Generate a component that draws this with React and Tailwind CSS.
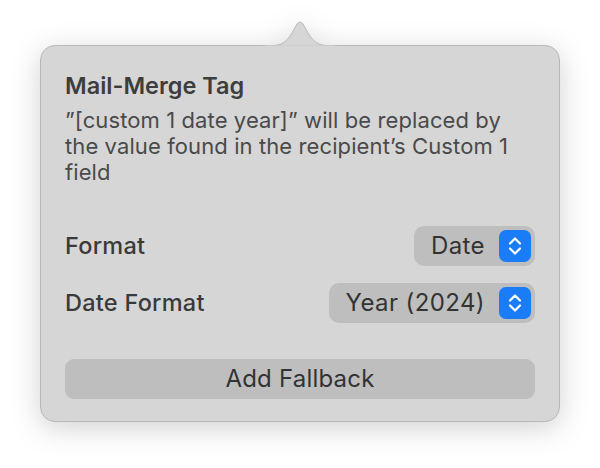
import React from "react";

const Stepper = () => (
    <span className="flex items-center justify-center w-[32px] h-[32px] rounded-[7px] bg-[#1b7cf8]">
        <svg width="16" height="24" viewBox="0 0 16 24" fill="none">
            <path d="M3 9.5L8 4.5L13 9.5" stroke="white" strokeWidth="2.2" strokeLinecap="round" strokeLinejoin="round" />
            <path d="M3 14.5L8 19.5L13 14.5" stroke="white" strokeWidth="2.2" strokeLinecap="round" strokeLinejoin="round" />
        </svg>
    </span>
);

const PopupButton = ({ label }) => (
    <button className="flex items-center gap-[14px] h-[40px] pl-[17px] pr-[4px] rounded-[10px] bg-[#bebebe] text-[#333] text-[24px] tracking-[0.4px]">
        <span>{label}</span>
        <Stepper />
    </button>
);

const App = () => {
    return (
        <div className="w-[600px] h-[468px] bg-white pt-[45px] pl-[40px]" style={{ fontFamily: "Inter, 'Noto Sans', sans-serif" }}>
            <div className="relative w-[520px] h-[377px] drop-shadow-[0_6px_14px_rgba(0,0,0,0.18)]">
                <svg className="absolute left-[225px] top-[-25px]" width="70" height="27" viewBox="0 0 70 27">
                    <path d="M0 26 C16 26 20 24 27 13 L32 4 C33.5 1.5 36.5 1.5 38 4 L43 13 C50 24 54 26 70 26 Z" fill="#d6d6d6" stroke="#b8b8b8" strokeWidth="1" />
                    <rect x="0" y="25.5" width="70" height="2" fill="#d6d6d6" />
                </svg>
                <div className="w-full h-full rounded-[15px] bg-[#d6d6d6] border border-[#b8b8b8] pt-[26px] px-[24px] text-[#3a3a3a]">
                    <h1 className="text-[23.5px] font-semibold leading-[28px] text-[#3d3d3d]">Mail-Merge Tag</h1>
                    <p className="mt-[7px] text-[22px] tracking-[0.1px] leading-[26px] text-[#4a4a4a]">
                        ”[custom 1 date year]” will be replaced by the value found in the recipient’s Custom 1 field
                    </p>
                    <div className="mt-[41px] flex items-center justify-between">
                        <span className="text-[23.5px] tracking-[0.25px] font-medium">Format</span>
                        <PopupButton label="Date" />
                    </div>
                    <div className="mt-[17px] flex items-center justify-between">
                        <span className="text-[23.5px] tracking-[0.25px] font-medium">Date Format</span>
                        <PopupButton label="Year (2024)" />
                    </div>
                    <button className="mt-[36px] w-full h-[40px] rounded-[9px] bg-[#bebebe] text-[24px] tracking-[0.2px] text-[#333]">
                        Add Fallback
                    </button>
                </div>
            </div>
        </div>
    );
};

export default App;
